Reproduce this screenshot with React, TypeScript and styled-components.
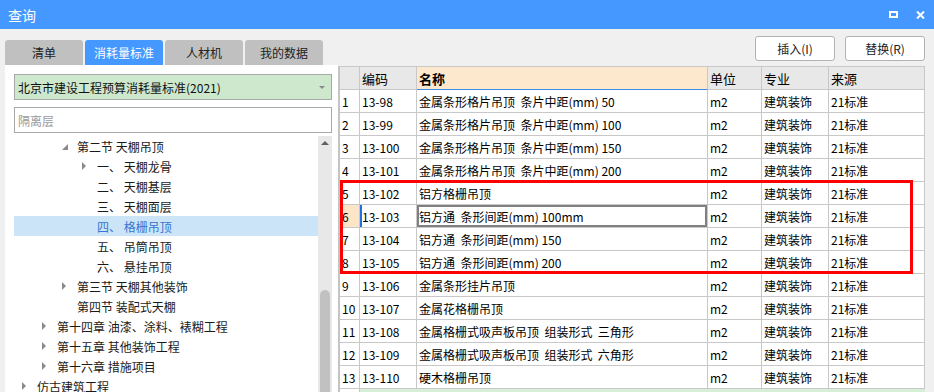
import React from 'react';
import styled, { createGlobalStyle } from 'styled-components';

const GlobalStyle = createGlobalStyle`
  html, body {
    margin: 0;
    padding: 0;
  }
  body {
    font-family: "Noto Sans CJK SC", "Noto Sans", sans-serif;
    background: #f0f0f0;
    overflow: hidden;
  }
  * {
    box-sizing: border-box;
  }
`;

const Window = styled.div`
  width: 934px;
  height: 392px;
  display: flex;
  flex-direction: column;
  overflow: hidden;
  background: #f0f0f0;
`;

const TitleBar = styled.div`
  height: 29px;
  flex: none;
  display: flex;
  align-items: center;
  padding: 0 9px 0 8px;
  background: #4598ff;
  color: #fff;
  font-size: 14px;
`;

const Title = styled.span`
  flex: 1;
`;

const WinButtons = styled.div`
  display: flex;
  align-items: center;
  gap: 18px;
  svg {
    display: block;
  }
`;

const Main = styled.div`
  flex: 1;
  min-height: 0;
  display: flex;
`;

const LeftCol = styled.div`
  width: 333px;
  margin-left: 5px;
  padding-top: 11px;
  display: flex;
  flex-direction: column;
`;

const Tabs = styled.div`
  height: 25px;
  flex: none;
  display: flex;
  gap: 2px;
`;

const Tab = styled.div<{ $active?: boolean }>`
  width: 78px;
  display: flex;
  align-items: center;
  justify-content: center;
  border-radius: 3px 3px 0 0;
  font-size: 12px;
  background: ${(p) => (p.$active ? '#4598ff' : '#c0c0c0')};
  color: ${(p) => (p.$active ? '#fff' : '#222')};
`;

const LeftPanel = styled.div`
  flex: 1;
  min-height: 0;
  display: flex;
  flex-direction: column;
  padding: 9px 6px 0 9px;
  background: #fff;
`;

const Select = styled.div`
  height: 26px;
  flex: none;
  display: flex;
  align-items: center;
  padding: 0 6px 0 3px;
  border: 1px solid #a9a9a9;
  background: #cde8cd;
  font-size: 12px;
  color: #111;
  span {
    flex: 1;
  }
  &::after {
    content: '';
    border-left: 3px solid transparent;
    border-right: 3px solid transparent;
    border-top: 3px solid #8a8a8a;
  }
`;

const Search = styled.input`
  height: 26px;
  flex: none;
  margin-top: 7px;
  padding: 0 3px;
  border: 1px solid #a9a9a9;
  background: #fff;
  font-family: inherit;
  font-size: 12px;
  outline: none;
  &::placeholder {
    color: #9a9a9a;
  }
`;

const TreeArea = styled.div`
  flex: 1;
  min-height: 0;
  margin-top: 3px;
  display: flex;
  overflow: hidden;
`;

const TreeList = styled.div`
  flex: 1;
`;

const TreeRow = styled.div<{ $level: number; $selected?: boolean }>`
  height: 20px;
  display: flex;
  align-items: center;
  padding-left: ${(p) => 8 + p.$level * 20}px;
  background: ${(p) => (p.$selected ? '#cce4f7' : 'transparent')};
  color: ${(p) => (p.$selected ? '#3674d0' : '#1a1a1a')};
  font-size: 12px;
  white-space: pre;
`;

const Toggle = styled.span`
  width: 15px;
  flex: none;
  display: flex;
  align-items: center;
`;

const Collapsed = styled.i`
  width: 0;
  height: 0;
  border-left: 4px solid #8a8a8a;
  border-top: 4px solid transparent;
  border-bottom: 4px solid transparent;
`;

const Expanded = styled.i`
  width: 0;
  height: 0;
  margin-top: 1px;
  border-bottom: 6px solid #8a8a8a;
  border-left: 6px solid transparent;
`;

const ScrollTrack = styled.div`
  width: 14px;
  flex: none;
  display: flex;
  flex-direction: column;
  align-items: center;
  background: #e8e8e8;
`;

const ScrollUp = styled.div`
  height: 14px;
  flex: none;
  display: flex;
  align-items: center;
  &::before {
    content: '';
    border-left: 4px solid transparent;
    border-right: 4px solid transparent;
    border-bottom: 4px solid #606060;
  }
`;

const ScrollThumb = styled.div`
  width: 10px;
  flex: 1;
  margin-top: 140px;
  border-radius: 5px 5px 0 0;
  background: #c1c1c1;
`;

const RightCol = styled.div`
  flex: 1;
  min-width: 0;
  display: flex;
  flex-direction: column;
`;

const ButtonBar = styled.div`
  height: 37px;
  flex: none;
  display: flex;
  justify-content: flex-end;
  gap: 10px;
  padding: 7px 9px 0 0;
`;

const ActionButton = styled.button`
  width: 80px;
  height: 25px;
  padding: 0;
  border: 1px solid #b3b3b3;
  border-radius: 3px;
  background: #fff;
  font-family: inherit;
  font-size: 12px;
  color: #222;
`;

const TableWrap = styled.div`
  position: relative;
  flex: 1;
  min-height: 0;
  width: 587px;
  overflow: hidden;
  border-top: 1px solid #c8c8c8;
  border-left: 2px solid #c4c4c4;
`;

const GridRow = styled.div`
  height: 23px;
  display: grid;
  grid-template-columns: 20px 57px 291px 54px 67px 96px;
`;

const Cell = styled.div<{ $bg?: string; $edit?: boolean; $mark?: boolean }>`
  display: flex;
  align-items: center;
  padding-left: 2px;
  border-right: 1px solid #c8c8c8;
  border-bottom: 1px solid #c8c8c8;
  background: ${(p) => p.$bg || '#fff'};
  font-size: 12px;
  color: #000;
  white-space: pre;
  overflow: hidden;
  box-shadow: ${(p) =>
    p.$edit ? 'inset 0 0 0 2px #808080' : p.$mark ? 'inset 2px 0 0 #1f6fe5' : 'none'};
`;

const HeadCell = styled(Cell)<{ $name?: boolean }>`
  font-size: 13px;
  font-weight: ${(p) => (p.$name ? 700 : 400)};
  background: ${(p) => (p.$name ? '#fde8cd' : '#e8e8e8')};
  border-bottom-color: ${(p) => (p.$name ? '#3d8ee6' : '#c8c8c8')};
`;

const FillCell = styled.div`
  grid-column: 2 / 7;
  background: #d6efd6;
`;

const RedBox = styled.div`
  position: absolute;
  left: 0;
  top: 113px;
  width: 573px;
  height: 94px;
  border: 3px solid #ff0000;
  pointer-events: none;
`;

type TreeItem = { label: string; level: number; toggle?: 'open' | 'closed'; selected?: boolean };

const tree: TreeItem[] = [
  { label: '第二节 天棚吊顶', level: 2, toggle: 'open' },
  { label: '一、 天棚龙骨', level: 3, toggle: 'closed' },
  { label: '二、 天棚基层', level: 3 },
  { label: '三、 天棚面层', level: 3 },
  { label: '四、 格栅吊顶', level: 3, selected: true },
  { label: '五、 吊筒吊顶', level: 3 },
  { label: '六、 悬挂吊顶', level: 3 },
  { label: '第三节 天棚其他装饰', level: 2, toggle: 'closed' },
  { label: '第四节 装配式天棚', level: 2 },
  { label: '第十四章 油漆、涂料、裱糊工程', level: 1, toggle: 'closed' },
  { label: '第十五章 其他装饰工程', level: 1, toggle: 'closed' },
  { label: '第十六章 措施项目', level: 1, toggle: 'closed' },
  { label: '仿古建筑工程', level: 0, toggle: 'closed' },
];

const rows: [string, string][] = [
  ['13-98', '金属条形格片吊顶  条片中距(mm) 50'],
  ['13-99', '金属条形格片吊顶  条片中距(mm) 100'],
  ['13-100', '金属条形格片吊顶  条片中距(mm) 150'],
  ['13-101', '金属条形格片吊顶  条片中距(mm) 200'],
  ['13-102', '铝方格栅吊顶'],
  ['13-103', '铝方通  条形间距(mm) 100mm'],
  ['13-104', '铝方通  条形间距(mm) 150'],
  ['13-105', '铝方通  条形间距(mm) 200'],
  ['13-106', '金属条形挂片吊顶'],
  ['13-107', '金属花格栅吊顶'],
  ['13-108', '金属格栅式吸声板吊顶  组装形式  三角形'],
  ['13-109', '金属格栅式吸声板吊顶  组装形式  六角形'],
  ['13-110', '硬木格栅吊顶'],
];

const tabs = ['清单', '消耗量标准', '人材机', '我的数据'];

const App: React.FC = () => {
  const activeRow = 6;
  return (
    <>
      <GlobalStyle />
      <Window>
        <TitleBar>
          <Title>查询</Title>
          <WinButtons>
            <svg width="9" height="7" viewBox="0 0 9 7">
              <rect x="1" y="1" width="7" height="5" fill="none" stroke="#fff" strokeWidth="2" />
            </svg>
            <svg width="9" height="8" viewBox="0 0 9 8">
              <path d="M1 0.5 L8 7.5 M8 0.5 L1 7.5" stroke="#fff" strokeWidth="2" />
            </svg>
          </WinButtons>
        </TitleBar>
        <Main>
          <LeftCol>
            <Tabs>
              {tabs.map((t, i) => (
                <Tab key={t} $active={i === 1}>
                  {t}
                </Tab>
              ))}
            </Tabs>
            <LeftPanel>
              <Select>
                <span>北京市建设工程预算消耗量标准(2021)</span>
              </Select>
              <Search placeholder="隔离层" readOnly />
              <TreeArea>
                <TreeList>
                  {tree.map((item) => (
                    <TreeRow key={item.label} $level={item.level} $selected={item.selected}>
                      <Toggle>
                        {item.toggle === 'open' && <Expanded />}
                        {item.toggle === 'closed' && <Collapsed />}
                      </Toggle>
                      {item.label}
                    </TreeRow>
                  ))}
                </TreeList>
                <ScrollTrack>
                  <ScrollUp />
                  <ScrollThumb />
                </ScrollTrack>
              </TreeArea>
            </LeftPanel>
          </LeftCol>
          <RightCol>
            <ButtonBar>
              <ActionButton>插入(I)</ActionButton>
              <ActionButton>替换(R)</ActionButton>
            </ButtonBar>
            <TableWrap>
              <GridRow>
                <HeadCell />
                <HeadCell>编码</HeadCell>
                <HeadCell $name>名称</HeadCell>
                <HeadCell>单位</HeadCell>
                <HeadCell>专业</HeadCell>
                <HeadCell>来源</HeadCell>
              </GridRow>
              {rows.map(([code, name], i) => {
                const n = i + 1;
                const active = n === activeRow;
                return (
                  <GridRow key={code}>
                    <Cell $bg={active ? '#fde6c8' : undefined}>{n}</Cell>
                    <Cell $mark={active}>{code}</Cell>
                    <Cell $edit={active}>{name}</Cell>
                    <Cell>m2</Cell>
                    <Cell>建筑装饰</Cell>
                    <Cell>21标准</Cell>
                  </GridRow>
                );
              })}
              <GridRow>
                <Cell />
                <FillCell />
              </GridRow>
              <RedBox />
            </TableWrap>
          </RightCol>
        </Main>
      </Window>
    </>
  );
};

export default App;
